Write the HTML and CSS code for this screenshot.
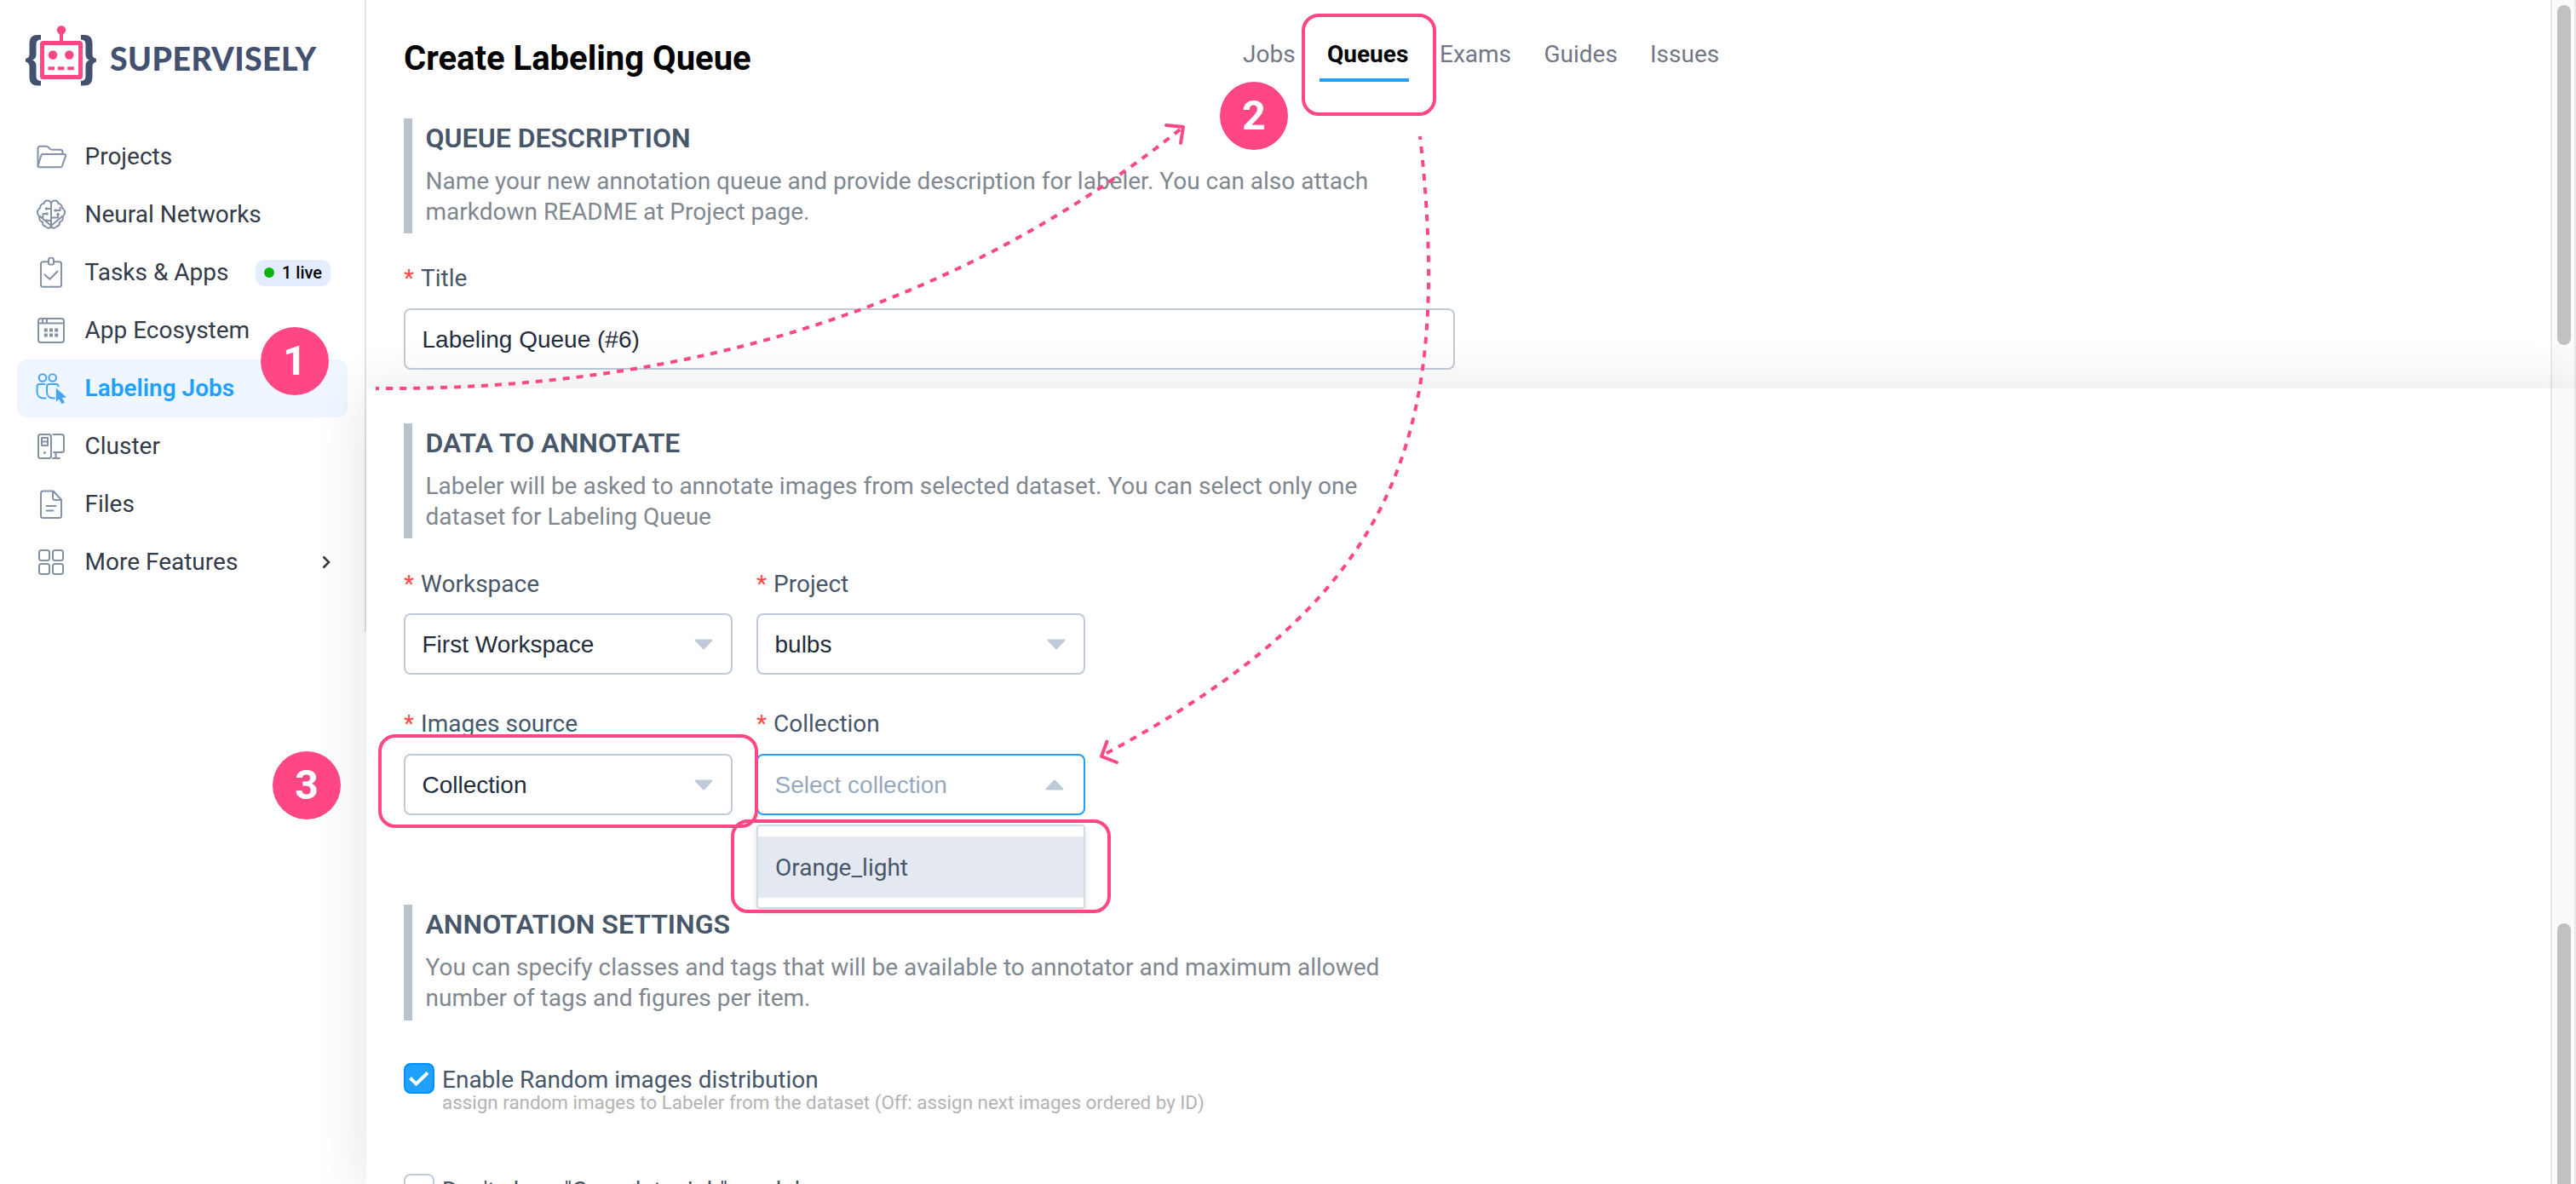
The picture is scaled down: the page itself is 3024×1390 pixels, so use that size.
FILE: index.html
```html
<!DOCTYPE html>
<html lang="en">
<head>
<meta charset="utf-8">
<title>Create Labeling Queue</title>
<link rel="stylesheet" href="styles.css">
</head>
<body>
<div class="app">
  <aside class="sidebar">
    <div class="logo">
      <svg class="logo-mark" viewBox="30 28 84 74" width="84" height="74">
        <path class="brace" d="M48 41v5.500q-5.500 0-5.500 5.500v12q0 5-4.500 6.500q4.500 1.500 4.500 6.500v12q0 6 5.500 6v5.500h-4q-9.500 0-9.500-9.500v-13q0-4.500-4.500-5.500v-3.500q4.500-1 4.500-5.500v-13q0-9.500 9.500-9.500z"/>
        <path class="brace" d="M95 41v5.500q5.500 0 5.500 5.500v12q0 5 4.500 6.500q-4.500 1.500-4.500 6.500v12q0 6-5.500 6v5.500h4q9.500 0 9.500-9.500v-13q0-4.500 4.500-5.500v-3.500q-4.500-1-4.500-5.500v-13q0-9.500-9.500-9.500z"/>
        <rect class="face" x="49.500" y="50.500" width="45" height="40" rx="1"/>
        <path class="pink" d="M70 38h4v11h-4zM56.500 78.200h7.500v4h-7.500zM67.800 78.200h7.500v4h-7.500zM79.300 78.200h7.500v4h-7.500z"/>
        <circle class="pink" cx="72" cy="35.300" r="5.200"/>
        <circle class="pink" cx="62" cy="64.500" r="5.200"/>
        <circle class="pink" cx="81.300" cy="64.500" r="5.200"/>
      </svg>
      <span class="wordmark">SUPERVISELY</span>
    </div>
    <nav class="menu">
      <a class="item"><svg class="icon" viewBox="0 0 36 36"><path d="M2.500 29V8a2 2 0 0 1 2-2.200h7.800c1 0 1.700.3 2.300.9l2.600 2.300c.6.600 1.200.8 2 .8h9.300a3 3 0 0 1 3 3v2"/><path d="M8.500 15H33.200c1.400 0 2.200 1 1.800 2.200l-4 11.600c-.4 1-1 1.500-2 1.500H4.200c-1.300 0-2-.9-1.600-2L6.200 16.700c.4-1.100 1.200-1.700 2.300-1.700z"/></svg><span>Projects</span></a>
      <a class="item"><svg class="icon" viewBox="0 0 36 36"><path d="M17.800 4.500c-.4-2-2-3-4-3-2.300 0-4 1.200-4.300 3.500-3 .2-4.600 2.200-4.200 5C3 11.300 1.800 13 2 15.500c.1 2 1 3.500 2.600 4.300M4.600 19.800c-1.300 3.200.2 6 3.500 6.900-.3 2.700.9 4.600 3.400 5.100 1 1.600 2.600 2.200 4 1.900 1.500-.3 2.300-1.500 2.300-3zM18.200 4.500c.4-2 2-3 4-3 2.300 0 4 1.200 4.300 3.500 3 .2 4.600 2.200 4.200 5 2.300 1.300 3.500 3 3.300 5.500-.1 2-1 3.500-2.600 4.300M31.400 19.800c1.300 3.200-.2 6-3.500 6.900.3 2.700-.9 4.600-3.400 5.100-1 1.600-2.600 2.200-4 1.900-1.500-.3-2.300-1.500-2.300-3zM18 4v27M18 11h-5M13 17H8.500v4H5M18 25h-5M18 21.500h8V17M23 13h5.500V9.500"/><path class="solid" d="M12.500 9.200a1.800 1.800 0 1 1 0 3.600 1.800 1.800 0 0 1 0-3.600zM13 15.200a1.800 1.800 0 1 1 0 3.600 1.800 1.800 0 0 1 0-3.600zM12.500 23.200a1.800 1.800 0 1 1 0 3.600 1.800 1.800 0 0 1 0-3.600zM23 11.200a1.800 1.800 0 1 1 0 3.600 1.800 1.800 0 0 1 0-3.600zM26 16a1.800 1.800 0 1 1 0 3.600 1.800 1.800 0 0 1 0-3.600z"/></svg><span>Neural Networks</span></a>
      <a class="item"><svg class="icon" viewBox="0 0 36 36"><path d="M14.500 5.300H8.500a2.500 2.500 0 0 0-2.500 2.500v24.500a2.500 2.500 0 0 0 2.500 2.500h19a2.500 2.500 0 0 0 2.500-2.500V7.800a2.500 2.500 0 0 0-2.500-2.500h-6M15 7V3.500a3 3 0 0 1 6 0V7c0 1-.5 1.500-1.500 1.500h-3C15.500 8.500 15 8 15 7zM10.500 20.500l6 5.300 9-9.300"/></svg><span>Tasks &amp; Apps</span><span class="live"><i class="live-dot"></i>1 live</span></a>
      <a class="item"><svg class="icon" viewBox="0 0 36 36"><rect x="3" y="4" width="30" height="28" rx="3"/><path d="M3 9.500h30M8 4v5M13 4v5"/><path class="solid" d="M9.800 15.500h4v4h-4zM16 15.500h4v4h-4zM22.200 15.500h4v4h-4zM9.800 21.500h4v4h-4zM16 21.500h4v4h-4zM22.200 21.500h4v4h-4z"/></svg><span>App Ecosystem</span></a>
      <a class="item active"><svg class="icon" viewBox="0 0 36 36"><circle cx="8" cy="5.500" r="4.300"/><circle cx="19.700" cy="5.500" r="4.300"/><path d="M10.500 13H4.500C2.500 13 1.500 14 1.500 16v6c0 4.500 3 7.500 7.500 7.500h2.500M26.500 15.500c0-1.600-.8-2.500-2.500-2.500h-8c-2 0-3 1-3 3v6c0 4.500 3 7.500 7.500 7.500h1.500"/><path class="solid" d="M23.800 17.500l12.200 11-5.200.4 3.200 5.600-3.600 1.600-3.100-5.700-3.500 3z"/></svg><span>Labeling Jobs</span></a>
      <a class="item"><svg class="icon" viewBox="0 0 36 36"><rect x="3" y="4" width="15" height="28" rx="2.500"/><path d="M7 8h7v9H7zM8 12.500h5M20.500 4H30a3 3 0 0 1 3 3v15.500a2.500 2.500 0 0 1-2.500 2.500H21M23.500 25v7M20 32h8"/><circle class="solid" cx="10.500" cy="25.500" r="1.500"/></svg><span>Cluster</span></a>
      <a class="item"><svg class="icon" viewBox="0 0 36 36"><path d="M20.500 2.500H8.500A2.500 2.500 0 0 0 6 5v26.500A2.500 2.500 0 0 0 8.500 34h19a2.500 2.500 0 0 0 2.500-2.500V12.800zM20 2.500v8a2.500 2.500 0 0 0 2.500 2.500H30M12.500 20h11M12.500 25.500h8"/></svg><span>Files</span></a>
      <a class="item"><svg class="icon" viewBox="0 0 36 36"><rect x="4" y="4" width="12" height="12" rx="2.500"/><rect x="20" y="4" width="12" height="12" rx="2.500"/><rect x="4" y="20" width="12" height="12" rx="2.500"/><rect x="20" y="20" width="12" height="12" rx="2.500"/></svg><span>More Features</span><svg class="chevron" viewBox="0 0 10 16"><path d="M1.500 1.500L8 8l-6.500 6.500"/></svg></a>
    </nav>
  </aside>

  <main class="main">
    <section class="pane pane-top">
      <div class="content">
        <header class="header">
          <h1 class="title">Create Labeling Queue</h1>
          <nav class="tabs"><a>Jobs</a><a class="current">Queues</a><a>Exams</a><a>Guides</a><a>Issues</a></nav>
        </header>
        <div class="intro">
          <h2>QUEUE DESCRIPTION</h2>
          <p>Name your new annotation queue and provide description for labeler. You can also attach<br>markdown README at Project page.</p>
        </div>
        <div class="field wide">
          <label class="label"><b>*</b><span>Title</span></label>
          <div class="control"><span>Labeling Queue (#6)</span></div>
        </div>
      </div>
      <div class="scrollbar"><div class="thumb"></div></div>
    </section>

    <section class="pane pane-bottom">
      <div class="content">
        <div class="intro">
          <h2>DATA TO ANNOTATE</h2>
          <p>Labeler will be asked to annotate images from selected dataset. You can select only one<br>dataset for Labeling Queue</p>
        </div>
        <div class="fields">
          <div class="field">
            <label class="label"><b>*</b><span>Workspace</span></label>
            <div class="control"><span>First Workspace</span><svg class="caret" viewBox="0 0 22 13"><path d="M1.500 1.500h19L11 11.500z"/></svg></div>
          </div>
          <div class="field">
            <label class="label"><b>*</b><span>Project</span></label>
            <div class="control"><span>bulbs</span><svg class="caret" viewBox="0 0 22 13"><path d="M1.500 1.500h19L11 11.500z"/></svg></div>
          </div>
          <div class="field">
            <label class="label"><b>*</b><span>Images source</span></label>
            <div class="control"><span>Collection</span><svg class="caret" viewBox="0 0 22 13"><path d="M1.500 1.500h19L11 11.500z"/></svg></div>
          </div>
          <div class="field">
            <label class="label"><b>*</b><span>Collection</span></label>
            <div class="control open"><span>Select collection</span><svg class="caret" viewBox="0 0 22 13"><path d="M1.500 11.500h19L11 1.500z"/></svg></div>
            <div class="dropdown"><div class="option">Orange_light</div></div>
          </div>
        </div>
        <div class="intro settings">
          <h2>ANNOTATION SETTINGS</h2>
          <p>You can specify classes and tags that will be available to annotator and maximum allowed<br>number of tags and figures per item.</p>
        </div>
        <div class="option-row">
          <span class="check checked"><svg viewBox="0 0 36 36" width="36" height="36"><path d="M7.500 17.500l7 7L28 11.500"/></svg></span>
          <div class="option-text"><span class="option-label">Enable Random images distribution</span><span class="hint">assign random images to Labeler from the dataset (Off: assign next images ordered by ID)</span></div>
        </div>
        <div class="option-row">
          <span class="check"></span>
          <div class="option-text"><span class="option-label">Don't show "Complete Job" modal</span></div>
        </div>
      </div>
      <div class="scrollbar"><div class="thumb"></div></div>
    </section>
  </main>
</div>

<div class="annotations">
  <svg class="arrows" viewBox="0 0 3024 1390" width="3024" height="1390">
    <path class="dash" d="M441 456Q1002 460 1389 149"/>
    <path class="tip" d="M1369 147L1389 149L1386 168"/>
    <path class="dash" d="M1667 160C1708 528 1631 707 1292 888"/>
    <path class="tip" d="M1299.500 870.500L1293 888L1311 895"/>
  </svg>
  <div class="frame frame-tab"></div>
  <div class="frame frame-source"></div>
  <div class="frame frame-option"></div>
  <div class="step step-one">1</div>
  <div class="step step-two">2</div>
  <div class="step step-three">3</div>
</div>
</body>
</html>
```
FILE: styles.css
```css
* { box-sizing: border-box; }
body {
  margin: 0;
  width: 3024px;
  height: 1390px;
  overflow: hidden;
  position: relative;
  background: #fff;
  font: 28px/36px Roboto, "Liberation Sans", sans-serif;
  color: #475669;
}
h1, h2, p { margin: 0; }

.app { display: flex; align-items: flex-start; height: 1390px; overflow: hidden; }

/* Sidebar */
.sidebar {
  flex: none;
  width: 430px;
  height: 742px;
  border-right: 2px solid #dfe4ec;
  padding: 28px 20px 0;
}
.logo { display: flex; height: 122px; padding-left: 10px; gap: 15px; }
.logo-mark { flex: none; }
.brace { fill: #435070; }
.face { fill: none; stroke: #ff4785; stroke-width: 5; }
.pink { fill: #ff4785; }
.wordmark {
  padding-top: 18px;
  font: 900 37.500px/46px Lato, sans-serif;
  letter-spacing: .45px;
  color: #435070;
}
.menu { display: flex; flex-direction: column; }
.item {
  display: flex;
  align-items: center;
  height: 68px;
  padding: 0 20px 0 22px;
  border-radius: 12px;
  color: #333a48;
}
.item > span { white-space: nowrap; }
.icon {
  flex: none;
  width: 36px;
  height: 36px;
  margin-right: 21.500px;
  fill: none;
  stroke: #8492a6;
  stroke-width: 2;
  stroke-linecap: round;
  stroke-linejoin: round;
}
.icon .solid { fill: #8492a6; stroke: none; }
.active { background: #eff6ff; color: #20a0ff; font-weight: 600; }
.active .icon { stroke: #45a5f0; }
.active .icon .solid { fill: #45a5f0; }
.item .live {
  display: flex;
  align-items: center;
  gap: 9px;
  margin-left: auto;
  height: 31px;
  padding: 0 10px;
  border-radius: 10px;
  background: #e4ecff;
  color: #000;
  font-size: 20px;
  font-weight: 500;
}
.live-dot { width: 12px; height: 12px; border-radius: 50%; background: #0db30d; }
.chevron { width: 10px; height: 16px; margin-left: auto; fill: none; stroke: #333a48; stroke-width: 2.600; }

/* Panes */
.main { flex: 1; display: flex; flex-direction: column; }
.pane { display: flex; overflow: hidden; }
.pane-top { height: 456px; }
.pane-bottom {
  height: 934px;
  background: #fff;
  box-shadow: 0 4px 60px rgba(0, 0, 0, .12);
  position: relative;
}
.content { flex: 1; padding-left: 44px; }
.pane-bottom .content { padding-top: 41px; }
.scrollbar {
  flex: none;
  width: 30px;
  border: solid #e8e8e8;
  border-width: 0 2px;
  background: #fafafa;
  padding: 6px 4px 0 6px;
}
.thumb { height: 399px; border-radius: 8px; background: #c1c1c1; }
.pane-bottom .thumb { margin-top: 622px; }

.header { display: flex; height: 139px; padding-top: 46px; }
.title { width: 985px; font-size: 40px; line-height: 46px; font-weight: 700; color: #000; }
.tabs { display: grid; grid-template-columns: 99px 132px 122.500px 124.500px 100px; color: #717786; }
.current { position: relative; color: #000; font-weight: 700; }
.current::after {
  content: "";
  position: absolute;
  left: -9px;
  top: 46px;
  width: 105px;
  height: 4px;
  background: #20a0ff;
}

.intro { height: 135px; border-left: 10px solid #b9c2cd; padding: 4px 0 0 15.500px; color: #7f8790; white-space: nowrap; }
.intro h2 { margin-bottom: 14px; font-size: 32px; line-height: 38px; font-weight: 600; color: #475669; }
.settings { margin-top: 105px; height: 136px; }

/* Form */
.fields { display: grid; grid-template-columns: 386px 386px; column-gap: 28px; row-gap: 5px; }
.field { position: relative; padding-top: 36px; }
.fields .field:nth-child(n + 3) { padding-top: 35px; margin-top: 0; }
.wide { width: 1234px; padding-top: 35px; }
.label { display: flex; gap: 8px; margin-bottom: 16px; }
.fields .field:nth-child(n + 3) .label { margin-bottom: 17px; }
.wide .label { margin-bottom: 17px; }
.label b { color: #ff4949; font-weight: 400; }
.control {
  display: flex;
  align-items: center;
  justify-content: space-between;
  height: 72px;
  padding: 0 21px 0 19.500px;
  border: 2px solid #bfcbd9;
  border-radius: 8px;
  color: #1f2d3d;
}
.control span { padding-top: 2px; font-family: "Liberation Sans", sans-serif; }
.open { border-color: #20a0ff; color: #97a8be; }
.caret { width: 22px; height: 13px; fill: #bfcbd9; stroke: #bfcbd9; stroke-width: 2; stroke-linejoin: round; }
.open .caret { margin-right: 2px; }
.dropdown {
  position: absolute;
  z-index: 2;
  left: 0;
  right: 0;
  top: 171px;
  height: 99px;
  padding: 12px 0;
  border: 2px solid #d1dbe5;
  border-radius: 4px;
  background: #fff;
  box-shadow: 0 4px 8px rgba(0, 0, 0, .12);
}
.option { height: 72px; padding: 19px 20px 0; background: #e4e8f1; color: #48576a; }

.option-row { display: flex; gap: 9px; height: 130px; }
.settings + .option-row { margin-top: 50px; }
.check { flex: none; width: 36px; height: 36px; border: 2px solid #bfcbd9; border-radius: 8px; background: #fff; }
.checked { border-color: #0190fe; background: #20a0ff; }
.check svg { display: block; margin: -2px; fill: none; stroke: #fff; stroke-width: 4; }
.option-text { display: flex; flex-direction: column; padding-top: 2px; white-space: nowrap; }
.hint { font-size: 22.400px; line-height: 26px; margin-top: -5px; color: #b3b3b3; }

/* Walkthrough markers laid over the page */
.annotations { position: absolute; inset: 0; z-index: 5; }
.arrows { display: block; }
.dash { fill: none; stroke: #ff4785; stroke-width: 4; stroke-dasharray: 8; stroke-dashoffset: 4; }
.tip { fill: none; stroke: #ff4785; stroke-width: 4; stroke-linecap: round; stroke-linejoin: round; }
.frame { position: absolute; border: 4px solid #ff4785; border-radius: 20px; }
.frame-tab { left: 1528px; top: 16px; width: 158px; height: 120px; }
.frame-source { left: 444px; top: 862px; width: 446px; height: 110px; }
.frame-option { left: 858px; top: 962px; width: 446px; height: 110px; }
.step {
  position: absolute;
  width: 80px;
  height: 80px;
  border-radius: 50%;
  background: #ff4785;
  color: #fff;
  font-size: 48px;
  font-weight: 700;
  line-height: 79px;
  text-align: center;
}
.step-one { left: 306px; top: 384px; }
.step-two { left: 1432px; top: 96px; }
.step-three { left: 320px; top: 882px; }
```
